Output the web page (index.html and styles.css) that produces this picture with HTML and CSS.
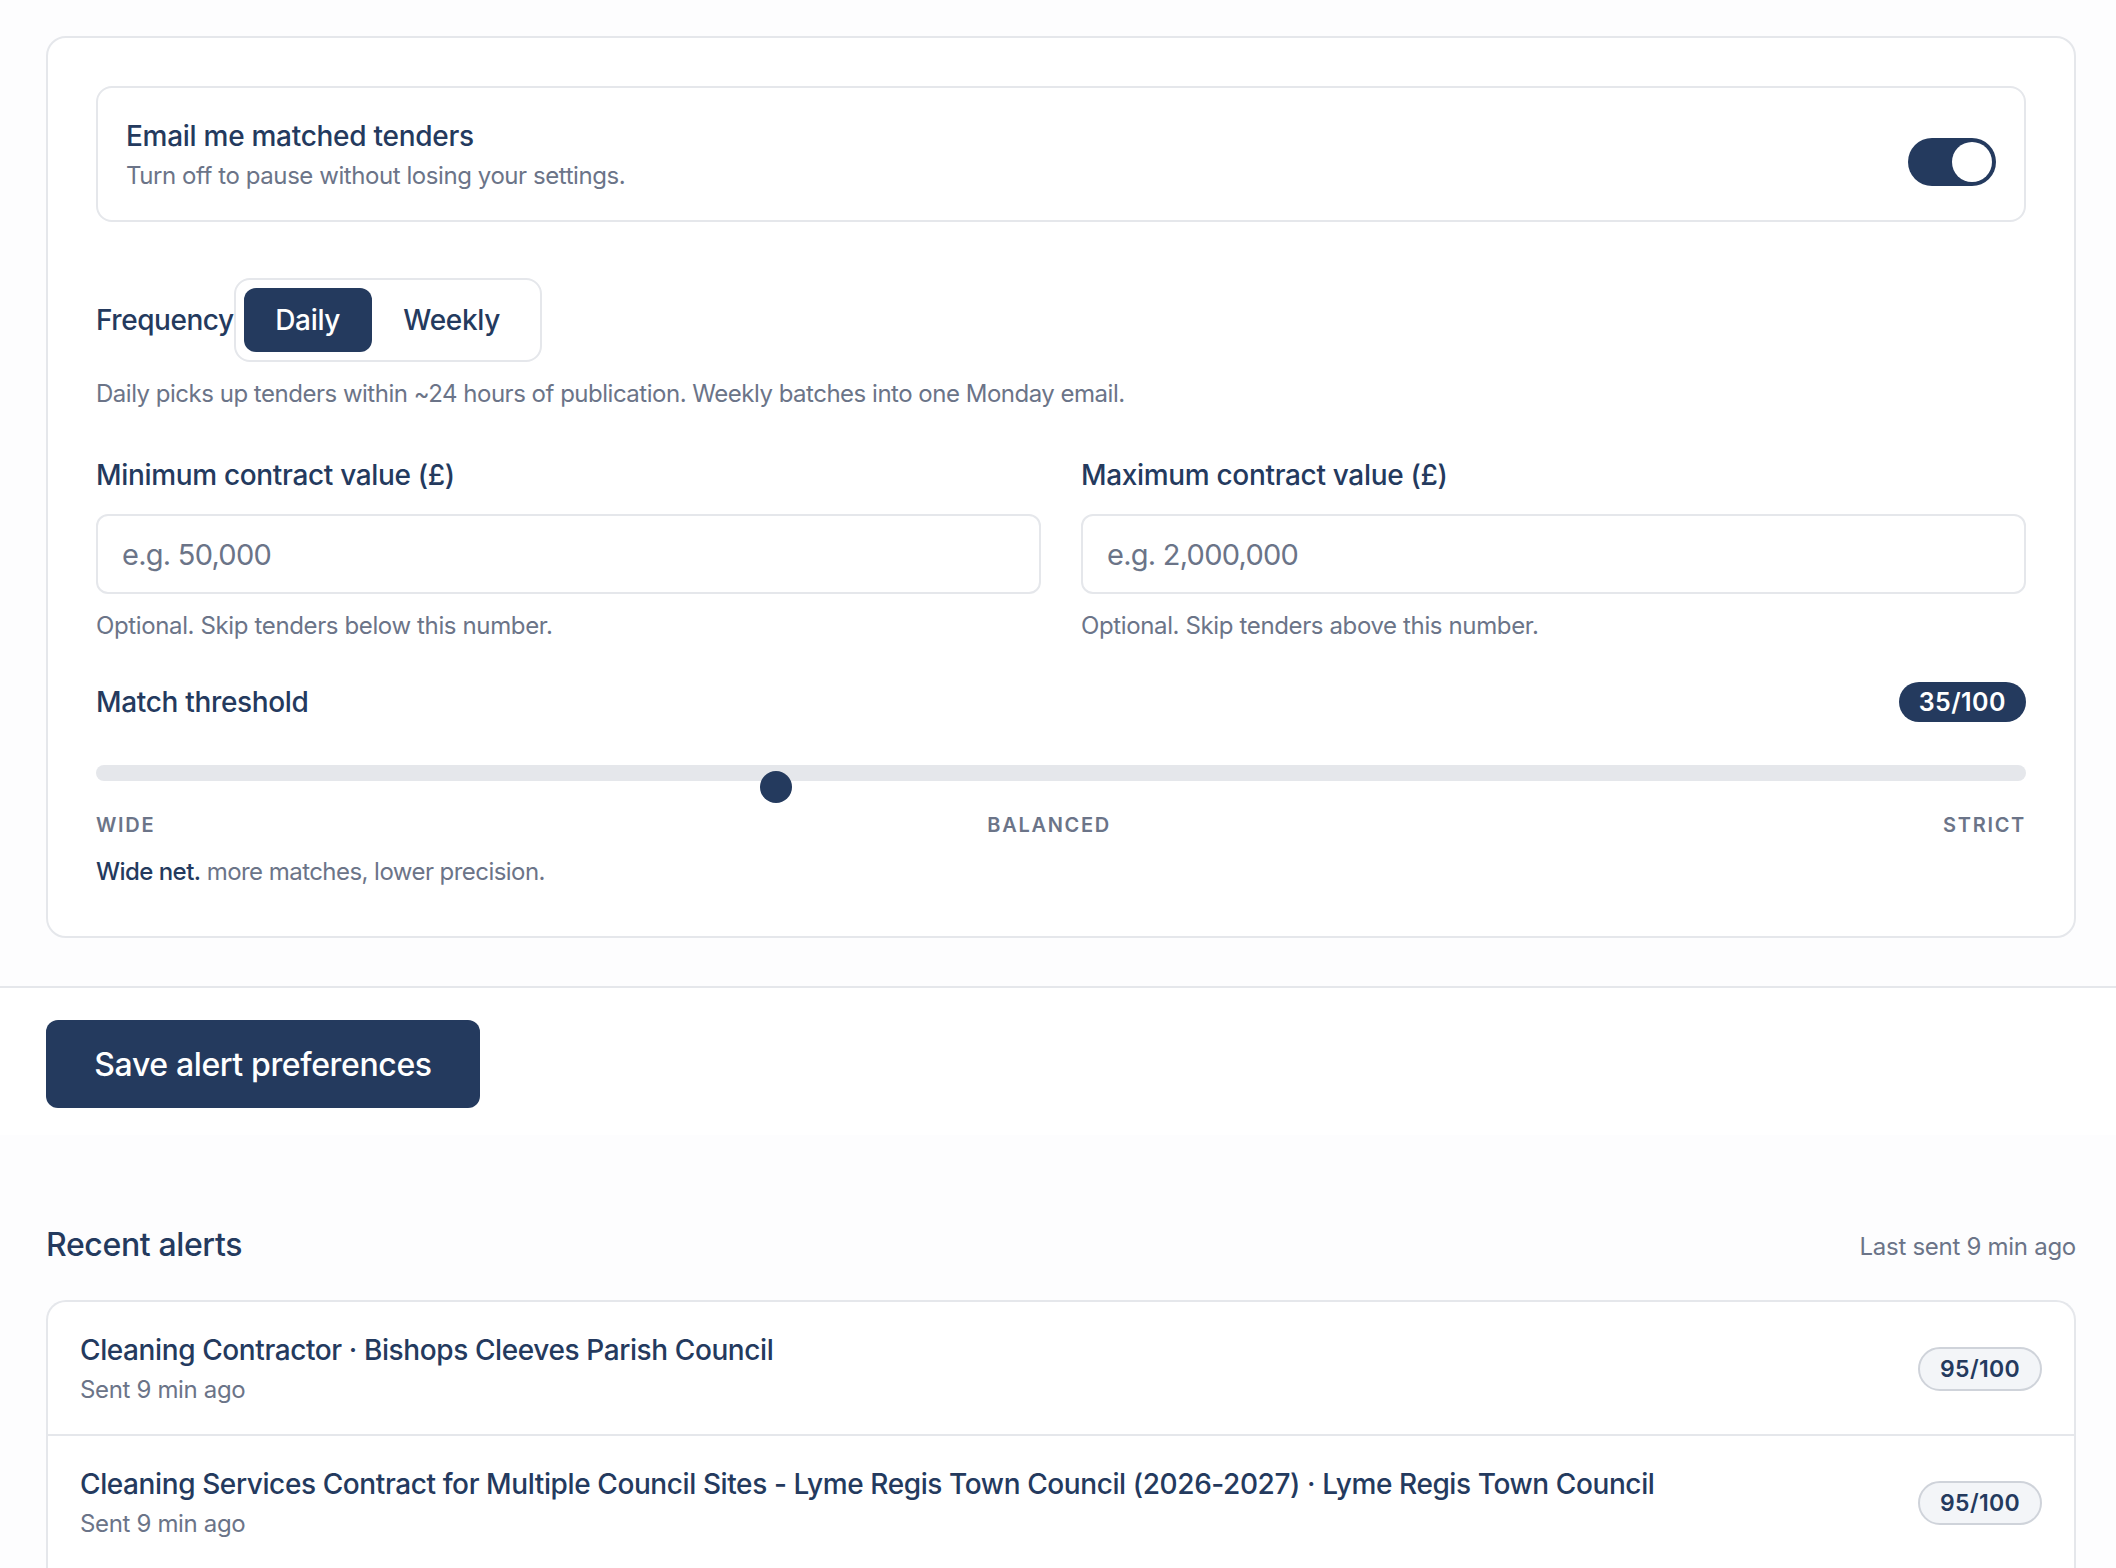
FILE: index.html
```html
<!DOCTYPE html>
<html lang="en">
<head>
<meta charset="utf-8">
<title>Alert preferences</title>
<link rel="stylesheet" href="styles.css">
</head>
<body>
<section class="settings">
  <div class="card">
    <div class="panel">
      <div>
        <div class="panel-title">Email me matched tenders</div>
        <div class="panel-sub">Turn off to pause without losing your settings.</div>
      </div>
      <div class="toggle"><span class="knob"></span></div>
    </div>
    <div class="freq">
      <span class="label freq-label">Frequency</span>
      <div class="seg">
        <span class="seg-btn active">Daily</span>
        <span class="seg-btn wide-btn">Weekly</span>
      </div>
    </div>
    <p class="help help-freq">Daily picks up tenders within ~24 hours of publication. Weekly batches into one Monday email.</p>
    <div class="fields">
      <div>
        <div class="label">Minimum contract value (£)</div>
        <input class="input" type="text" placeholder="e.g. 50,000">
        <p class="help help-field">Optional. Skip tenders below this number.</p>
      </div>
      <div>
        <div class="label">Maximum contract value (£)</div>
        <input class="input" type="text" placeholder="e.g. 2,000,000">
        <p class="help help-field">Optional. Skip tenders above this number.</p>
      </div>
    </div>
    <div class="threshold">
      <span class="label">Match threshold</span>
      <span class="value-pill">35/100</span>
    </div>
    <div class="track"><span class="thumb"></span></div>
    <div class="scale"><span>WIDE</span><span>BALANCED</span><span>STRICT</span></div>
    <p class="note"><strong>Wide net.</strong> more matches, lower precision.</p>
  </div>
</section>
<div class="savebar">
  <button class="save" type="button">Save alert preferences</button>
</div>
<section class="alerts">
  <div class="alerts-head">
    <h2>Recent alerts</h2>
    <span class="last-sent">Last sent 9 min ago</span>
  </div>
  <div class="list">
    <div class="row">
      <div>
        <div class="row-title">Cleaning Contractor · Bishops Cleeves Parish Council</div>
        <div class="row-sub">Sent 9 min ago</div>
      </div>
      <span class="score">95/100</span>
    </div>
    <div class="row">
      <div>
        <div class="row-title">Cleaning Services Contract for Multiple Council Sites - Lyme Regis Town Council (2026-2027) · Lyme Regis Town Council</div>
        <div class="row-sub">Sent 9 min ago</div>
      </div>
      <span class="score">95/100</span>
    </div>
  </div>
</section>
</body>
</html>
```
FILE: styles.css
```css
* { box-sizing: border-box; }
html, body { margin: 0; height: 100%; overflow: hidden; }
body {
  background: #fdfdfe;
  color: #243a5e;
  font-family: Inter, "Liberation Sans", sans-serif;
}
.settings { padding: 36px 40px 48px 46px; }
.card {
  background: #fff;
  border: 2px solid #e5e7eb;
  border-radius: 20px;
  padding: 48px 48px 46px;
}
.panel {
  display: flex;
  align-items: flex-start;
  justify-content: space-between;
  height: 136px;
  padding: 28px;
  border: 2px solid #e5e7eb;
  border-radius: 16px;
}
.panel-title { font-size: 28px; line-height: 40px; font-weight: 500; letter-spacing: -0.28px; }
.panel-sub { margin-top: 2px; font-size: 24px; line-height: 36px; color: #6b7488; letter-spacing: -0.43px; }
.toggle {
  display: flex;
  justify-content: flex-end;
  width: 88px;
  height: 48px;
  margin-top: 22px;
  padding: 4px;
  border-radius: 24px;
  background: #243a5e;
}
.knob { width: 40px; height: 40px; border-radius: 50%; background: #fff; }
.freq { display: flex; align-items: center; margin-top: 56px; }
.label { font-size: 28px; line-height: 40px; font-weight: 500; letter-spacing: -0.33px; }
.freq-label { letter-spacing: -0.45px; }
.seg {
  display: flex;
  padding: 8px;
  border: 2px solid #e5e7eb;
  border-radius: 16px;
  background: #fff;
}
.seg-btn {
  display: flex;
  align-items: center;
  justify-content: center;
  height: 64px;
  width: 128px;
  font-size: 28px;
  font-weight: 500;
  letter-spacing: -0.3px;
  border-radius: 12px;
}
.wide-btn { width: 160px; }
.seg-btn.active { background: #243a5e; color: #fff; }
.help { margin: 0; font-size: 24px; line-height: 36px; color: #6b7488; }
.help-freq { margin-top: 14px; letter-spacing: -0.49px; }
.help-field { margin-top: 14px; letter-spacing: -0.37px; }
.fields {
  display: grid;
  grid-template-columns: 1fr 1fr;
  gap: 40px;
  margin-top: 43px;
}
.input {
  display: block;
  width: 100%;
  height: 80px;
  margin-top: 19px;
  padding: 0 24px;
  border: 2px solid #e5e7eb;
  border-radius: 12px;
  background: #fff;
  color: #243a5e;
  font: 400 29px Inter, "Liberation Sans", sans-serif;
  letter-spacing: -0.75px;
  outline: none;
}
.input::placeholder { color: #6b7488; opacity: 1; }
.threshold {
  display: flex;
  align-items: center;
  justify-content: space-between;
  margin-top: 38px;
}
.value-pill {
  display: flex;
  align-items: center;
  height: 40px;
  padding: 0 20px;
  border-radius: 20px;
  background: #243a5e;
  color: #fff;
  font-size: 25px;
  font-weight: 600;
  letter-spacing: 0.45px;
}
.track {
  position: relative;
  height: 16px;
  margin-top: 43px;
  border-radius: 8px;
  background: #e5e7eb;
}
.thumb {
  position: absolute;
  left: 664px;
  top: 6px;
  width: 32px;
  height: 32px;
  border-radius: 50%;
  background: #243a5e;
}
.scale {
  display: flex;
  justify-content: space-between;
  margin-top: 30px;
  font-size: 20px;
  line-height: 28px;
  font-weight: 600;
  letter-spacing: 1.7px;
  color: #6b7488;
}
.note { margin: 15px 0 0; font-size: 24px; line-height: 36px; color: #6b7488; letter-spacing: -0.55px; }
.note strong { color: #243a5e; font-weight: 500; }
.savebar {
  padding: 32px 0 27px 46px;
  background: #fff;
  border-top: 2px solid #e5e7eb;
}
.save {
  display: block;
  width: 434px;
  height: 88px;
  padding: 0;
  border: 0;
  border-radius: 12px;
  background: #243a5e;
  color: #fff;
  font: 500 32px Inter, "Liberation Sans", sans-serif;
  letter-spacing: -0.37px;
}
.alerts { padding: 86px 40px 0 46px; }
.alerts-head {
  display: flex;
  align-items: center;
  justify-content: space-between;
  margin-bottom: 31px;
}
.alerts-head h2 { margin: 0; font-size: 32px; line-height: 48px; font-weight: 500; letter-spacing: -0.37px; }
.last-sent { font-size: 24px; line-height: 36px; color: #6b7488; padding-top: 4px; letter-spacing: -0.28px; }
.list {
  background: #fff;
  border: 2px solid #e5e7eb;
  border-bottom: 0;
  border-radius: 20px 20px 0 0;
}
.row {
  display: flex;
  align-items: center;
  justify-content: space-between;
  padding: 27px 32px 25px;
  border-bottom: 2px solid #e5e7eb;
}
.row-title { font-size: 28px; line-height: 42px; font-weight: 500; letter-spacing: -0.4px; }
.row-sub { font-size: 24px; line-height: 38px; color: #6b7488; letter-spacing: -0.34px; }
.score {
  display: flex;
  align-items: center;
  justify-content: center;
  width: 124px;
  height: 44px;
  border: 2px solid #cfd3da;
  border-radius: 22px;
  background: #f3f5f8;
  font-size: 23px;
  font-weight: 600;
  letter-spacing: 0.3px;
}
```
